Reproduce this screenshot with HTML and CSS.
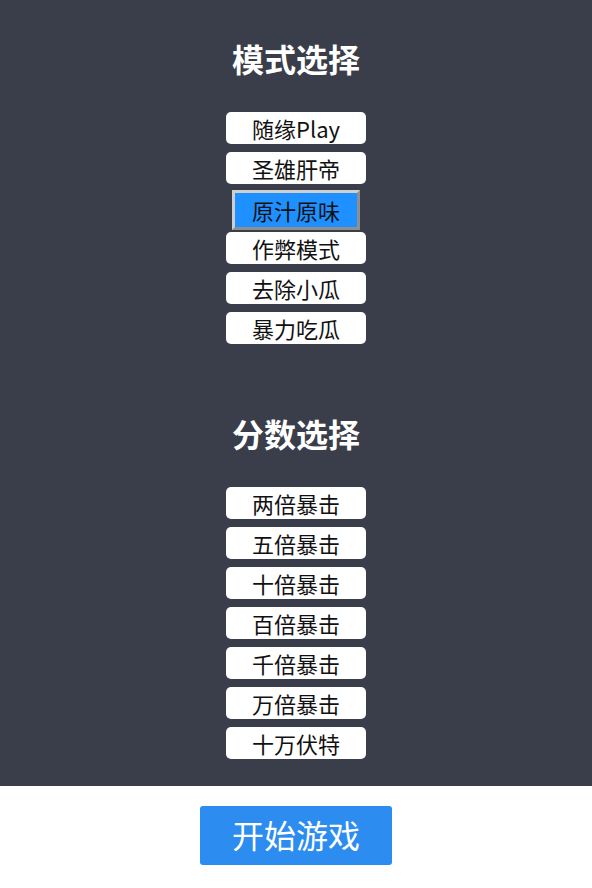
FILE: index.html
```html
<!DOCTYPE html>
<html lang="zh-CN">
<head>
<meta charset="utf-8">
<title>模式选择</title>
<link rel="stylesheet" href="styles.css">
</head>
<body>
<main class="panel">
  <section class="group group-mode">
    <h2 class="title">模式选择</h2>
    <div class="options">
      <button class="opt">随缘Play</button>
      <button class="opt">圣雄肝帝</button>
      <button class="opt opt-active">原汁原味</button>
      <button class="opt">作弊模式</button>
      <button class="opt">去除小瓜</button>
      <button class="opt">暴力吃瓜</button>
    </div>
  </section>
  <section class="group group-score">
    <h2 class="title">分数选择</h2>
    <div class="options">
      <button class="opt">两倍暴击</button>
      <button class="opt">五倍暴击</button>
      <button class="opt">十倍暴击</button>
      <button class="opt">百倍暴击</button>
      <button class="opt">千倍暴击</button>
      <button class="opt">万倍暴击</button>
      <button class="opt">十万伏特</button>
    </div>
  </section>
</main>
<footer class="footer">
  <button class="start">开始游戏</button>
</footer>
</body>
</html>
```
FILE: styles.css
```css
html, body {
  margin: 0;
  padding: 0;
  background: #ffffff;
}
body {
  font-family: "Noto Sans CJK SC", "Noto Sans", sans-serif;
}
.panel {
  background: #3a3d4a;
  height: 786px;
  box-sizing: border-box;
  padding-top: 38px;
  display: flex;
  flex-direction: column;
  align-items: center;
}
.group {
  display: flex;
  flex-direction: column;
  align-items: center;
}
.group-score {
  margin-top: 69px;
}
.title {
  margin: 0;
  color: #ffffff;
  font-size: 32px;
  font-weight: bold;
  line-height: 40px;
  height: 40px;
}
.options {
  margin-top: 34px;
  display: flex;
  flex-direction: column;
  align-items: center;
  gap: 8px;
}
.opt {
  width: 140px;
  height: 32px;
  box-sizing: border-box;
  margin: 0;
  padding: 0;
  border: none;
  border-radius: 5px;
  background: #ffffff;
  color: #111111;
  font-family: "Noto Sans CJK SC", "Noto Sans", sans-serif;
  font-size: 22px;
  line-height: 31px;
}
.opt-active {
  width: 128px;
  height: 40px;
  border-radius: 0;
  border-style: solid;
  border-width: 3px;
  border-color: #cfcfcf #8f8f8f #8f8f8f #cfcfcf;
  background: #1e90ff;
  line-height: 33px;
  margin-top: -2px;
  margin-bottom: -6px;
}
.footer {
  display: flex;
  justify-content: center;
  padding-top: 20px;
}
.start {
  width: 192px;
  height: 59px;
  margin: 0;
  padding: 0 0 3px;
  border: none;
  border-radius: 3px;
  background: #2d8cf0;
  color: #ffffff;
  font-family: "Noto Sans CJK SC", "Noto Sans", sans-serif;
  font-size: 32px;
  line-height: 56px;
}
```
